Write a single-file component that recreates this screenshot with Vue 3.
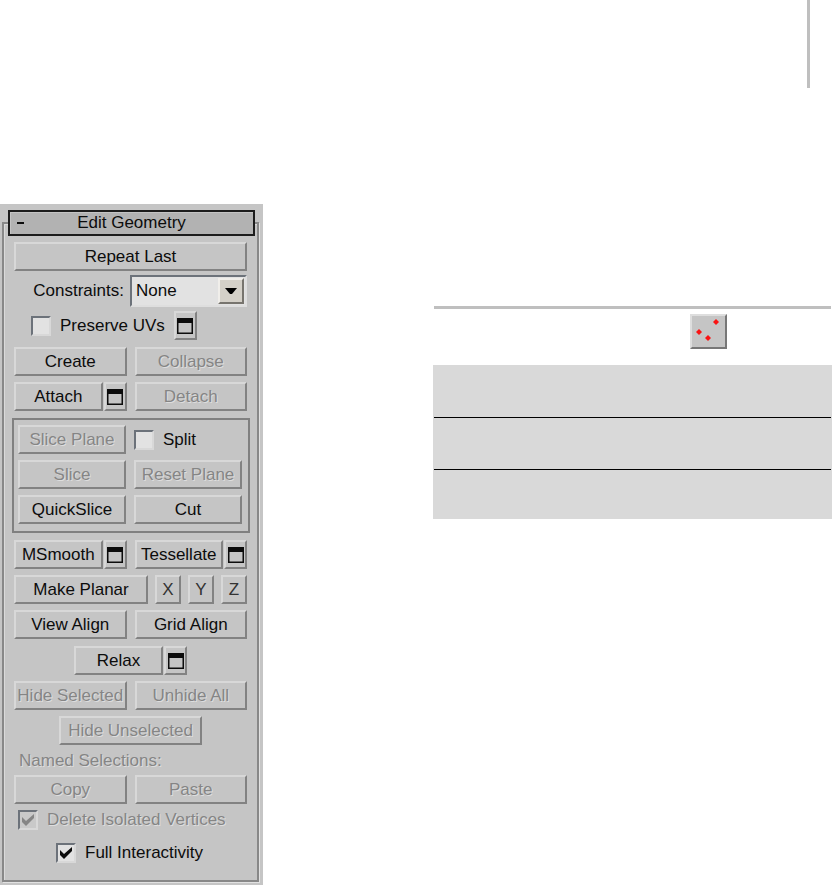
<script setup>
import { ref, h } from 'vue'

const open = ref(true)
const constraint = ref('None')
const preserveUvs = ref(false)
const split = ref(false)
const deleteIsolated = ref(true)
const fullInteractivity = ref(true)

const WindowIcon = () =>
  h('svg', { width: 16, height: 16, viewBox: '0 0 16 16', 'aria-hidden': 'true' }, [
    h('path', { d: 'M0 0H16V16H0ZM1.5 5V14.5H14.5V5Z', fill: '#0c0c0c', 'fill-rule': 'evenodd' })
  ])

const CheckIcon = () =>
  h('svg', { class: 'tick', width: 20, height: 20, viewBox: '0 0 20 20', 'aria-hidden': 'true' }, [
    h('path', { d: 'M4 7L8 11L16 4V8L8 16L4 12Z', fill: 'currentColor' })
  ])
</script>

<template>
  <div class="page">
    <header class="top"><div class="rule"></div></header>

    <section class="panel">
      <div class="frame">
        <button class="title" type="button" @click="open = !open">
          <span class="minus"></span><span>Edit Geometry</span>
        </button>

        <div v-show="open" class="body">
          <div class="stack tight">
            <button class="btn" type="button">Repeat Last</button>
            <div class="constraints">
              <label for="constraints">Constraints:</label>
              <div class="combo">
                <select id="constraints" v-model="constraint">
                  <option>None</option>
                  <option>Edge</option>
                  <option>Face</option>
                </select>
                <span class="drop">
                  <svg width="12" height="7" viewBox="0 0 12 7" aria-hidden="true"><path d="M0 0H12L7 6H5Z" fill="#000" /></svg>
                </span>
              </div>
            </div>
            <div class="preserve">
              <label class="check"><span class="box"><input v-model="preserveUvs" type="checkbox" /><CheckIcon v-if="preserveUvs" /></span>Preserve UVs</label>
              <button class="btn small" type="button" aria-label="Preserve UVs settings"><WindowIcon /></button>
            </div>
          </div>

          <div class="stack">
            <div class="pair">
              <button class="btn" type="button">Create</button>
              <button class="btn" type="button" disabled>Collapse</button>
            </div>
            <div class="pair">
              <div class="joined">
                <button class="btn" type="button">Attach</button>
                <button class="btn small" type="button" aria-label="Attach list"><WindowIcon /></button>
              </div>
              <button class="btn" type="button" disabled>Detach</button>
            </div>
          </div>

          <div class="group stack">
            <div class="pair">
              <button class="btn" type="button" disabled>Slice Plane</button>
              <label class="check"><span class="box"><input v-model="split" type="checkbox" /><CheckIcon v-if="split" /></span>Split</label>
            </div>
            <div class="pair">
              <button class="btn" type="button" disabled>Slice</button>
              <button class="btn" type="button" disabled>Reset Plane</button>
            </div>
            <div class="pair">
              <button class="btn" type="button">QuickSlice</button>
              <button class="btn" type="button">Cut</button>
            </div>
          </div>

          <div class="stack">
            <div class="pair">
              <div class="joined">
                <button class="btn" type="button">MSmooth</button>
                <button class="btn small" type="button" aria-label="MSmooth settings"><WindowIcon /></button>
              </div>
              <div class="joined">
                <button class="btn" type="button">Tessellate</button>
                <button class="btn small" type="button" aria-label="Tessellate settings"><WindowIcon /></button>
              </div>
            </div>
            <div class="planar">
              <button class="btn" type="button">Make Planar</button>
              <button class="btn axis" type="button">X</button>
              <button class="btn axis" type="button">Y</button>
              <button class="btn axis" type="button">Z</button>
            </div>
            <div class="pair">
              <button class="btn" type="button">View Align</button>
              <button class="btn" type="button">Grid Align</button>
            </div>
          </div>

          <div class="stack">
            <div class="joined relax">
              <button class="btn" type="button">Relax</button>
              <button class="btn small" type="button" aria-label="Relax settings"><WindowIcon /></button>
            </div>
            <div class="pair">
              <button class="btn" type="button" disabled>Hide Selected</button>
              <button class="btn" type="button" disabled>Unhide All</button>
            </div>
            <button class="btn unselected" type="button" disabled>Hide Unselected</button>
          </div>

          <div class="stack">
            <p class="caption">Named Selections:</p>
            <div class="pair">
              <button class="btn" type="button" disabled>Copy</button>
              <button class="btn" type="button" disabled>Paste</button>
            </div>
            <label class="check off isolated"><span class="box"><input v-model="deleteIsolated" type="checkbox" disabled /><CheckIcon v-if="deleteIsolated" /></span>Delete Isolated Vertices</label>
          </div>

          <label class="check full"><span class="box"><input v-model="fullInteractivity" type="checkbox" /><CheckIcon v-if="fullInteractivity" /></span>Full Interactivity</label>
        </div>
      </div>
    </section>

    <section class="sheet">
      <div class="sheet-head">
        <button class="vertex" type="button" aria-label="Vertex">
          <svg width="33" height="31" viewBox="0 0 33 31" aria-hidden="true">
            <path
              v-for="[x, y] in [[24, 6], [7, 16], [16, 22]]"
              :key="x"
              :transform="`translate(${x} ${y})`"
              d="M0 -3L3 0L0 3L-3 0Z"
              fill="#fa1414"
            />
          </svg>
        </button>
      </div>
      <div class="bands">
        <div class="band"></div>
        <div class="band"></div>
        <div class="band"></div>
      </div>
    </section>
  </div>
</template>

<style>
body {
  background: #fff;
}
</style>

<style scoped>
.page {
  display: grid;
  grid-template-columns: minmax(263px, 263fr) 170fr 399fr;
  grid-template-rows: 204px auto;
  align-items: start;
  font-family: "Liberation Sans", Arial, sans-serif;
  font-size: 17px;
  line-height: 20px;
  color: #0c0c0c;
}
.page *,
.page *::before {
  box-sizing: border-box;
}
button,
select,
input {
  margin: 0;
  font: inherit;
  color: inherit;
}
.top {
  grid-column: 1 / -1;
  display: flex;
  justify-content: flex-end;
  padding-right: 22px;
}
.rule {
  width: 3px;
  height: 88px;
  background: #bfbfbf;
}

/* Rollout panel */
.panel {
  background: #c5c5c5;
  padding: 18px 4px 3px 2px;
}
.frame {
  border: 2px solid #888;
  box-shadow: 1px 1px 0 #e2e2e2, inset 1px 1px 0 #dadada;
  padding: 0 2px 17px 4px;
}
.title {
  display: grid;
  grid-template-columns: 22px 1fr 22px;
  align-items: center;
  width: 100%;
  height: 26px;
  margin-top: -14px;
  padding: 0;
  border: 2px solid #1c1c1c;
  background: #b2b2b2;
  box-shadow: inset 1px 1px 0 #c4c4c4;
}
.minus {
  width: 7px;
  height: 2px;
  margin-left: 7px;
  background: #0c0c0c;
}
.body {
  display: flex;
  flex-direction: column;
  gap: 7px;
  padding: 6px 8px 0 6px;
}
.stack {
  display: flex;
  flex-direction: column;
  gap: 6px;
}
.tight {
  gap: 4px;
}
.btn {
  display: flex;
  align-items: center;
  justify-content: center;
  min-width: 0;
  height: 29px;
  padding: 0;
  border: 2px solid;
  border-color: #d8d8d8 #828282 #828282 #d8d8d8;
  background: #c5c5c5;
  white-space: nowrap;
}
.btn:disabled,
.off,
.caption {
  color: #858585;
  text-shadow: 1px 1px 0 #dedede;
}
.small {
  width: 23px;
}
.pair {
  display: grid;
  grid-template-columns: 1fr 1fr;
  gap: 8px;
}
.joined {
  display: grid;
  grid-template-columns: 1fr 23px;
  gap: 1px;
}
.planar {
  display: grid;
  grid-template-columns: 1fr 26px 26px 26px;
  gap: 7px;
}
.axis {
  color: #333;
}
.relax {
  align-self: center;
  width: 113px;
}
.unselected {
  align-self: center;
  width: 143px;
}
.constraints {
  display: flex;
  align-items: center;
  justify-content: flex-end;
  gap: 6px;
}
.combo {
  display: grid;
  width: 117px;
  height: 32px;
  border: 2px solid;
  border-color: #6c727a #dedede #dedede #6c727a;
  background: #e2e2e2;
}
.combo select {
  grid-area: 1 / 1;
  appearance: none;
  border: 0;
  padding: 0 28px 0 4px;
  background: transparent;
}
.drop {
  grid-area: 1 / 1;
  justify-self: end;
  display: flex;
  align-items: center;
  justify-content: center;
  width: 26px;
  margin: 1px;
  border: 2px solid;
  border-color: #f0eeea #77746e #77746e #f0eeea;
  background: #d4d0c8;
  pointer-events: none;
}
.preserve {
  display: flex;
  align-items: center;
  gap: 9px;
  padding-left: 17px;
}
.check {
  display: flex;
  align-items: center;
  gap: 9px;
  white-space: nowrap;
}
.box {
  display: grid;
  width: 20px;
  height: 20px;
}
.box input {
  grid-area: 1 / 1;
  appearance: none;
  width: 20px;
  height: 20px;
  border: 2px solid;
  border-color: #6c727a #d8d8d8 #d8d8d8 #6c727a;
  background: #e2e2e2;
}
.off input {
  background: #c9c9c9;
}
.tick {
  grid-area: 1 / 1;
  pointer-events: none;
}
.group {
  margin: 0 -3px 0 -2px;
  padding: 5px 6px 7px 4px;
  border: 2px solid #808080;
}
.caption {
  margin: 0;
  padding-left: 5px;
  line-height: 17px;
}
.isolated {
  padding-left: 4px;
}
.full {
  padding: 6px 0 0 42px;
}

/* Reference sheet */
.sheet {
  grid-column: 3;
  padding-top: 102px;
}
.sheet-head {
  display: flex;
  justify-content: flex-end;
  height: 59px;
  margin: 0 1px;
  padding: 5px 104px 0 0;
  border-top: 3px solid #bfbfbf;
}
.vertex {
  width: 37px;
  height: 35px;
  padding: 0;
  border: 2px solid;
  border-color: #dedede #777 #777 #dedede;
  background: #c5c5c5;
}
.vertex svg {
  display: block;
}
.bands {
  padding: 0 1px;
  background: #d9d9d9;
}
.band {
  height: 52px;
}
.band + .band {
  border-top: 1px solid #000;
}
.band:last-child {
  height: 50px;
}
</style>
